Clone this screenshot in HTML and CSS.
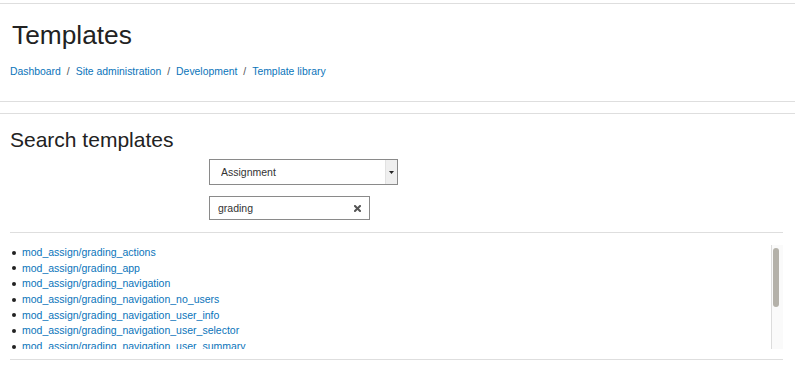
FILE: index.html
```html
<!DOCTYPE html>
<html>
<head>
  <title>Templates</title>
  <link rel="stylesheet" href="styles.css">
</head>
<body>
  <!-- Page header -->
  <header class="page-header">
    <h1>Templates</h1>
    <nav class="breadcrumb">
      <a href="#">Dashboard</a><span class="divider">/</span><a href="#">Site administration</a><span class="divider">/</span><a href="#">Development</a><span class="divider">/</span><a href="#">Template library</a>
    </nav>
  </header>

  <!-- Main region -->
  <div class="region-main">
    <h2>Search templates</h2>
    <form class="search-form">
      <div class="select-box">
        <select id="component">
          <option>Assignment</option>
        </select>
        <span class="select-btn">
          <svg width="5" height="3" viewBox="0 0 5 3"><polygon points="0,0 5,0 2.5,3" fill="#222"/></svg>
        </span>
      </div>
      <div class="search-box">
        <input type="text" id="search" value="grading">
        <span class="clear-btn">
          <svg width="7" height="7" viewBox="0 0 7 7"><path d="M1 1L6 6M6 1L1 6" stroke="#555" stroke-width="2" stroke-linecap="square"/></svg>
        </span>
      </div>
    </form>

    <div class="results">
      <div class="results-scroll">
        <div class="results-view">
          <ul class="template-list">
            <li><a href="#">mod_assign/grading_actions</a></li>
            <li><a href="#">mod_assign/grading_app</a></li>
            <li><a href="#">mod_assign/grading_navigation</a></li>
            <li><a href="#">mod_assign/grading_navigation_no_users</a></li>
            <li><a href="#">mod_assign/grading_navigation_user_info</a></li>
            <li><a href="#">mod_assign/grading_navigation_user_selector</a></li>
            <li><a href="#">mod_assign/grading_navigation_user_summary</a></li>
            <li><a href="#">mod_assign/grading_options</a></li>
            <li><a href="#">mod_assign/grading_panel</a></li>
            <li><a href="#">mod_assign/grading_save_in_progress</a></li>
            <li><a href="#">mod_assign/grading_sticky_footer</a></li>
          </ul>
        </div>
        <div class="scrollbar">
          <div class="scrollbar-thumb"></div>
        </div>
      </div>
    </div>
  </div>
</body>
</html>
```

FILE: styles.css
```css
body {
  font-family: "Liberation Sans", Arial, sans-serif;
  font-size: 10.5px;
  color: #333;
  background-color: #fff;
  margin: 0;
}

a {
  color: #0a74ba;
  text-decoration: none;
}

.page-header {
  margin-top: 3px;
  border-top: 1px solid #dedede;
  border-bottom: 1px solid #dedede;
  padding: 0 10px 22px;
}

h1 {
  font-size: 26.3px;
  font-weight: normal;
  line-height: 30px;
  color: #222;
  margin: 16px 0 0 2px;
}

.breadcrumb {
  font-size: 10.4px;
  line-height: 15px;
  margin-top: 14px;
}

.breadcrumb .divider {
  color: #555;
  margin: 0 6px;
}

.region-main {
  margin-top: 11px;
  border-top: 1px solid #dedede;
  padding: 0 12px 0 10px;
}

h2 {
  font-size: 21px;
  font-weight: normal;
  line-height: 25px;
  color: #222;
  margin: 13px 0 0;
}

.search-form {
  margin: 7px 0 0 199px;
}

.select-box {
  display: flex;
  width: 189px;
  height: 26px;
  box-sizing: border-box;
  border: 1px solid #8a8a8a;
}

.select-box select {
  flex: 1;
  appearance: none;
  -webkit-appearance: none;
  border: none;
  background: #fff;
  font: inherit;
  color: #333;
  padding: 0 0 1px 11px;
  outline: none;
}

.select-btn {
  width: 11px;
  background-color: #efefef;
  border-left: 1px solid #e2e2e2;
  display: flex;
  align-items: center;
  justify-content: center;
}

.search-box {
  display: flex;
  align-items: center;
  width: 161px;
  height: 24px;
  box-sizing: border-box;
  border: 1px solid #8a8a8a;
  margin-top: 11px;
}

.search-box input {
  flex: 1;
  min-width: 0;
  border: none;
  font: inherit;
  color: #333;
  padding: 0 0 0 8px;
  outline: none;
}

.clear-btn {
  display: flex;
  margin-right: 8px;
}

.results {
  margin-top: 12px;
  border-top: 1px solid #dedede;
  border-bottom: 1px solid #dedede;
  padding: 12px 0 10px;
}

.results-scroll {
  display: flex;
  height: 104px;
}

.results-view {
  flex: 1;
  overflow: hidden;
}

.scrollbar {
  width: 11px;
  background-color: #fafafa;
  border-left: 1px solid #dcdcdc;
}

.scrollbar-thumb {
  width: 6px;
  height: 59px;
  margin: 3px 0 0 1px;
  background-color: #b4b1a9;
  border-radius: 3px;
}

.template-list {
  list-style: none;
  margin: 0;
  padding: 0 0 0 12px;
  line-height: 15.67px;
}

.template-list li::before {
  content: "";
  display: inline-block;
  width: 4px;
  height: 4px;
  border-radius: 50%;
  background-color: #222;
  vertical-align: middle;
  margin: -1px 6px 0 -10px;
}
```
